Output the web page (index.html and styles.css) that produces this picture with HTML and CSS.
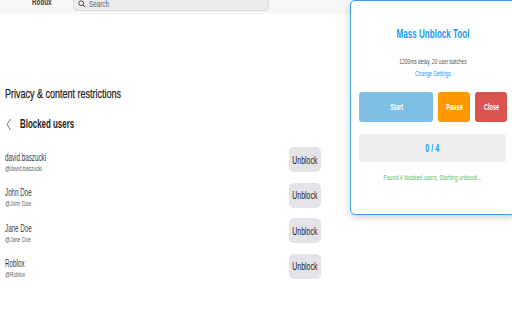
FILE: index.html
```html
<!doctype html>
<html>
<head>
<meta charset="utf-8">
<title>Blocked users</title>
<link rel="stylesheet" href="styles.css">
</head>
<body>
	<div class="topbar">
		<span class="brand">Robux</span>
		<div class="search">
			<svg width="8" height="8" viewBox="0 0 10 10"><circle cx="4" cy="4" r="3" fill="none" stroke="#444" stroke-width="1.2"/><path d="M6.3 6.3 L9 9" stroke="#444" stroke-width="1.2"/></svg>
			<span>Search</span>
		</div>
	</div>

	<div class="content">
		<div class="heading">Privacy &amp; content restrictions</div>
		<div class="subhead">
			<svg width="6" height="13" viewBox="0 0 6 13"><path d="M4.5 1 L1 6.5 L4.5 12" fill="none" stroke="#666" stroke-width="0.9"/></svg>
			<span>Blocked users</span>
		</div>

		<div class="list">
			<div class="row">
				<div class="who"><div class="name">david.baszucki</div><div class="handle">@david.baszucki</div></div>
				<button class="unblock"><span>Unblock</span></button>
			</div>
			<div class="row">
				<div class="who"><div class="name">John Doe</div><div class="handle">@John Doe</div></div>
				<button class="unblock"><span>Unblock</span></button>
			</div>
			<div class="row">
				<div class="who"><div class="name">Jane Doe</div><div class="handle">@Jane Doe</div></div>
				<button class="unblock"><span>Unblock</span></button>
			</div>
			<div class="row">
				<div class="who"><div class="name">Roblox</div><div class="handle">@Roblox</div></div>
				<button class="unblock"><span>Unblock</span></button>
			</div>
		</div>
	</div>

	<!-- floating tool panel -->
	<div class="panel">
		<div class="ptitle">Mass Unblock Tool</div>
		<div class="pinfo">1200ms delay, 20 user batches</div>
		<div class="plink">Change Settings</div>
		<div class="pbtns">
			<button class="pb start"><span>Start</span></button>
			<button class="pb pause"><span>Pause</span></button>
			<button class="pb close"><span>Close</span></button>
		</div>
		<div class="progress"><span>0 / 4</span></div>
		<div class="status">Found 4 blocked users. Starting unblock...</div>
	</div>
</body>
</html>
```

FILE: styles.css
```css
/* texts are drawn narrow: each text is squeezed with scaleX */
html, body {margin: 0; padding: 0;}
body {width: 512px; height: 320px; overflow: hidden; position: relative; background: #ffffff; font-family: "Liberation Sans", Arial, sans-serif; color: #393b3d;}

.topbar {height: 14px; background-color: #f7f7f8; display: flex; align-items: flex-start;}
.topbar>.brand {width: 41px; margin-left: 32px; margin-top: -3px; font-size: 9px; line-height: 10px; font-weight: bold; color: #393b3d; transform: scaleX(0.7); transform-origin: left center;}
.topbar>.search {width: 196px; height: 15px; margin-top: -4px; box-sizing: border-box; background-color: #ececef; border: 1px solid #dcdce0; border-radius: 4px; display: flex; align-items: center; gap: 3px; padding-left: 4px; font-size: 9px; color: #606162;}
.topbar>.search>span {display: inline-block; transform: scaleX(0.7); transform-origin: left center;}

.content {padding: 0 5px;}
.heading {margin-top: 72px; height: 16px; line-height: 16px; font-size: 12.5px; color: #1f2022; transform: scaleX(0.72); transform-origin: left center; -webkit-text-stroke: 0.25px #1f2022;}
.subhead {margin-top: 14px; height: 16px; display: flex; align-items: center; gap: 8px; padding-left: 1px;}
.subhead>span {display: inline-block; font-size: 12px; font-weight: bold; color: #1f2022; transform: scaleX(0.66); transform-origin: left center;}

.list {margin-top: 10px; width: 316px;}
.row {height: 35.5px; display: flex; align-items: center; justify-content: space-between;}
.who {display: flex; flex-direction: column; padding-top: 4px;}
.name {font-size: 11px; line-height: 13px; color: #393b3d; transform: scaleX(0.57); transform-origin: left center;}
.handle {font-size: 7px; line-height: 9px; color: #606162; transform: scaleX(0.7); transform-origin: left center;}
.unblock {width: 32px; height: 25px; padding: 0; border: none; border-radius: 5px; background-color: #e3e3e8; font-family: inherit; font-size: 11px; color: #1f2022; display: flex; align-items: center; justify-content: center; overflow: visible;}
.unblock>span {display: inline-block; transform: scaleX(0.63);}

.panel {position: absolute; left: 350px; top: 0; width: 166px; height: 215px; box-sizing: border-box; padding: 0 8px; background: #ffffff; border: 1.5px solid #3d9cf0; border-radius: 5px; box-shadow: 0 2px 8px rgba(0, 0, 0, 0.2); text-align: center;}
.ptitle {margin-top: 24.5px; height: 16px; line-height: 16px; font-size: 13px; font-weight: bold; color: #2196f3; transform: scaleX(0.62);}
.pinfo {margin-top: 15px; font-size: 7.5px; line-height: 9px; color: #555555; transform: scaleX(0.65);}
.plink {margin-top: 3.5px; font-size: 7.5px; line-height: 9px; color: #2196f3; transform: scaleX(0.65);}
.pbtns {margin-top: 14px; display: flex; gap: 5px;}
.pb {height: 30px; border: none; border-radius: 3px; color: #ffffff; font-family: inherit; font-size: 8.5px; font-weight: bold; padding: 0; display: flex; align-items: center; justify-content: center;}
.pb>span {display: inline-block; transform: scaleX(0.66);}
.pb.start {width: 75px; background-color: #7fbfe3;}
.pb.pause {width: 32px; background-color: #ff9800;}
.pb.close {width: 32px; background-color: #d9534f;}
.progress {margin-top: 12px; width: 147px; height: 28px; line-height: 28px; border-radius: 3px; background-color: #efefef; font-size: 10.5px; font-weight: bold; color: #2196f3;}
.progress>span {display: inline-block; transform: scaleX(0.68);}
.status {margin-top: 10.5px; width: 147px; font-size: 7.5px; line-height: 9px; color: #5cb85c; transform: scaleX(0.7);}
```
